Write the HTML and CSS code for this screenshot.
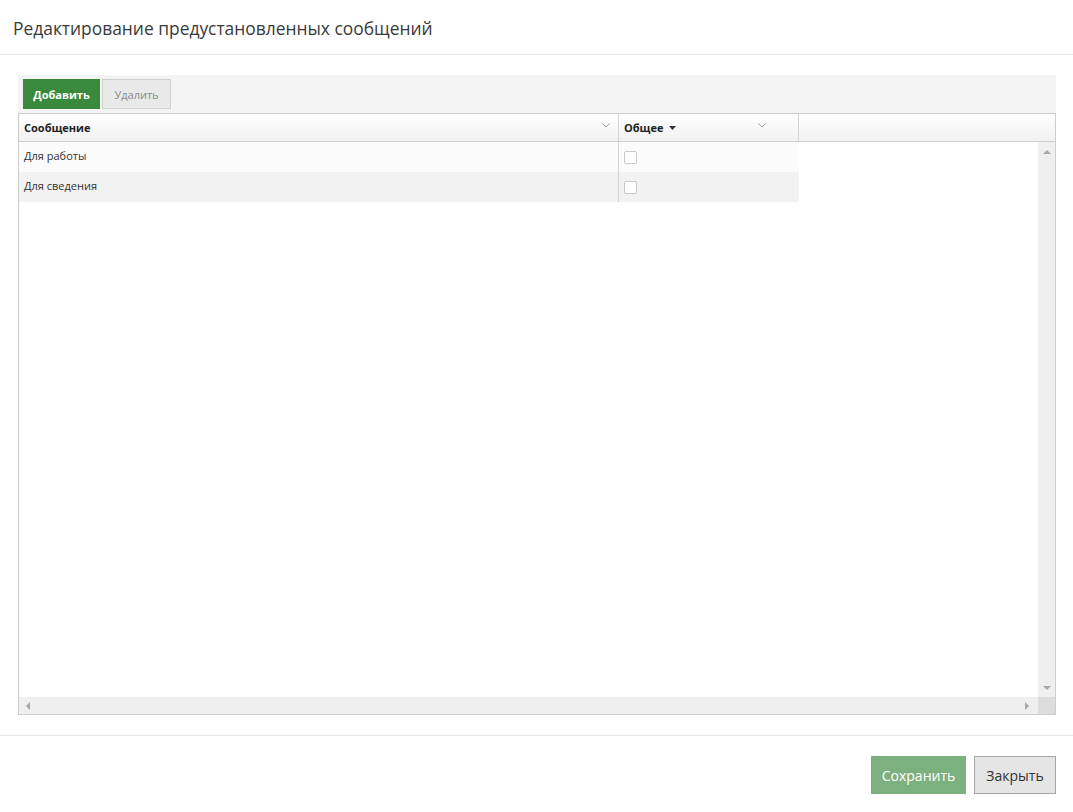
FILE: index.html
```html
<!DOCTYPE html>
<html lang="ru">
<head>
    <meta charset="UTF-8">
    <title>Редактирование предустановленных сообщений</title>
    <link rel="stylesheet" href="styles.css">
</head>
<body>
    <div class="dlg-header">Редактирование предустановленных сообщений</div>

    <div class="dlg-body">
        <div class="toolbar">
            <button class="btn btn-add">Добавить</button>
            <button class="btn btn-del" disabled>Удалить</button>
        </div>

        <div class="grid">
            <div class="grid-head">
                <div class="hcell col-msg">
                    <span>Сообщение</span>
                    <svg class="chev" width="8" height="5" viewBox="0 0 8 5"><path d="M0.5 0.5 L4 4 L7.5 0.5" fill="none" stroke="#999" stroke-width="1"/></svg>
                </div>
                <div class="hcell col-common">
                    <span>Общее <svg class="sort" width="7" height="4" viewBox="0 0 7 4"><path d="M0 0 L7 0 L3.5 4 Z" fill="#333"/></svg></span>
                    <svg class="chev" width="8" height="5" viewBox="0 0 8 5"><path d="M0.5 0.5 L4 4 L7.5 0.5" fill="none" stroke="#999" stroke-width="1"/></svg>
                </div>
                <div class="hcell col-fill"></div>
            </div>

            <div class="grid-body">
                <div class="rows">
                    <div class="row">
                        <div class="cell col-msg">Для работы</div>
                        <div class="cell col-common"><span class="check"></span></div>
                    </div>
                    <div class="row alt">
                        <div class="cell col-msg">Для сведения</div>
                        <div class="cell col-common"><span class="check"></span></div>
                    </div>
                </div>
                <div class="vscroll">
                    <svg width="8" height="5" viewBox="0 0 8 5"><path d="M0 5 L4 1 L8 5 Z" fill="#a8a8a8"/></svg>
                    <svg width="8" height="5" viewBox="0 0 8 5"><path d="M0 0 L4 4 L8 0 Z" fill="#a8a8a8"/></svg>
                </div>
                <div class="hscroll">
                    <svg width="5" height="8" viewBox="0 0 5 8"><path d="M5 0 L1 4 L5 8 Z" fill="#a8a8a8"/></svg>
                    <svg width="5" height="8" viewBox="0 0 5 8"><path d="M0 0 L4 4 L0 8 Z" fill="#a8a8a8"/></svg>
                </div>
                <div class="corner"></div>
            </div>
        </div>
    </div>

    <div class="dlg-footer">
        <button class="btn btn-save">Сохранить</button>
        <button class="btn btn-close">Закрыть</button>
    </div>
</body>
</html>
```

FILE: styles.css
```css
body {
    margin: 0;
    font-family: 'Open Sans', 'Noto Sans', sans-serif;
    color: #333;
    background: #fff;
}
.dlg-header {
    height: 55px;
    box-sizing: border-box;
    padding: 16px 13px 0;
    font-size: 17.4px;
    color: #3a3a3a;
    border-bottom: 1px solid #e5e5e5;
}
.dlg-body {
    padding: 20px 17px 20px 18px;
}
.toolbar {
    display: flex;
    gap: 2px;
    height: 38px;
    box-sizing: border-box;
    padding: 4px 5px;
    background: #f4f4f4;
}
.btn {
    font-family: inherit;
    cursor: pointer;
    box-sizing: border-box;
}
.btn-add {
    width: 77px;
    height: 30px;
    border: none;
    background: #3a8a3e;
    color: #fff;
    font-size: 11px;
    font-weight: bold;
}
.btn-del {
    width: 69px;
    height: 30px;
    border: 1px solid #cfcfcf;
    background: #e9e9e9;
    color: #8a8a8a;
    font-size: 11px;
}
.grid {
    border: 1px solid #cdcdcd;
    height: 602px;
    box-sizing: border-box;
    display: flex;
    flex-direction: column;
}
.grid-head {
    display: flex;
    height: 28px;
    box-sizing: border-box;
    border-bottom: 1px solid #d0d0d0;
    background: linear-gradient(#ffffff, #f1f1f1);
}
.hcell {
    display: flex;
    align-items: center;
    justify-content: space-between;
    box-sizing: border-box;
    padding: 0 8px 0 5px;
    font-size: 11px;
    font-weight: bold;
    color: #222;
}
.hcell .chev {
    margin-top: -4px;
}
.sort {
    margin-left: 3px;
    vertical-align: 2px;
}
.col-msg {
    width: 600px;
    border-right: 1px solid #d4d4d4;
}
.col-common {
    width: 180px;
    border-right: 1px solid #d4d4d4;
    padding-right: 32px;
}
.col-fill {
    flex: 1;
}
.grid-body {
    flex: 1;
    display: grid;
    grid-template-columns: 1fr 17px;
    grid-template-rows: 1fr 17px;
}
.rows {
    background: #fff;
}
.row {
    display: flex;
    height: 30px;
}
.row .col-msg,
.row .col-common {
    background: #fbfbfb;
}
.row.alt .col-msg,
.row.alt .col-common {
    background: #f2f2f2;
}
.cell {
    box-sizing: border-box;
    padding: 6px 5px 0;
    font-size: 11px;
    color: #333;
}
.row .col-common {
    border-right: none;
    padding-top: 9px;
}
.check {
    display: block;
    width: 11px;
    height: 11px;
    border: 1px solid #c8c8c8;
    border-radius: 2px;
    background: #fff;
}
.vscroll {
    background: #efefef;
    display: flex;
    flex-direction: column;
    justify-content: space-between;
    align-items: center;
    padding: 7px 0 6px;
}
.hscroll {
    background: #efefef;
    display: flex;
    justify-content: space-between;
    align-items: center;
    padding: 0 8px 0 6px;
}
.corner {
    background: #dcdcdc;
}
.dlg-footer {
    border-top: 1px solid #e5e5e5;
    padding: 20px 17px 0 0;
    display: flex;
    justify-content: flex-end;
    gap: 8px;
}
.btn-save {
    width: 95px;
    height: 38px;
    border: none;
    background: #7db07f;
    color: #fff;
    font-size: 14px;
}
.btn-close {
    width: 82px;
    height: 38px;
    border: 1px solid #aaa5a0;
    background: #e5e5e5;
    color: #333;
    font-size: 14px;
}
```
